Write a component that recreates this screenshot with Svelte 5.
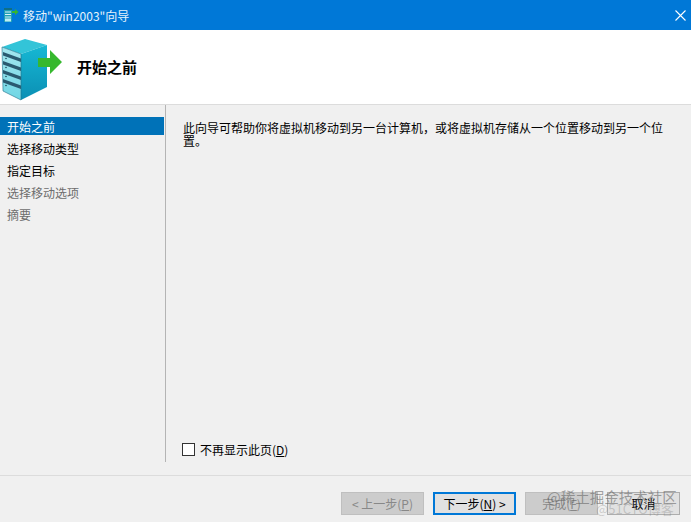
<script>
	const steps = [
		{ label: '开始之前', active: true },
		{ label: '选择移动类型' },
		{ label: '指定目标' },
		{ label: '选择移动选项', muted: true },
		{ label: '摘要', muted: true }
	];
	const slats = [0, 1, 2, 3];
</script>

<div class="wizard">
	<header class="titlebar">
		<svg class="app-icon" viewBox="0 0 18 16" width="18" height="16">
			<rect x="1" y="1" width="8" height="14" fill="#1f9fb5" />
			<rect x="1" y="1" width="8" height="2" fill="#0f6f86" />
			<path d="M2 5h6M2 7.500h6M2 10h6" stroke="#d8f4f8" stroke-width="1.1" />
			<rect x="2" y="11.500" width="6" height="3" fill="#bdeef4" />
			<path d="M9 4h3V2l3.500 3-3.500 3V6H9z" fill="#35b52f" />
		</svg>
		<span class="title">移动"win2003"向导</span>
		<svg class="close" viewBox="0 0 11 11" width="11" height="11">
			<path d="M.5.500l10 10M10.500.500l-10 10" stroke="#fff" stroke-width="1.100" fill="none" />
		</svg>
	</header>

	<section class="banner">
		<svg class="banner-icon" viewBox="0 32 64 70" width="64" height="70">
			<defs>
				<linearGradient id="front" x1="0" y1="0" x2="0" y2="1">
					<stop offset="0" stop-color="#a5e6ef" />
					<stop offset="1" stop-color="#6fd6e4" />
				</linearGradient>
				<linearGradient id="side" x1="0" y1="0" x2="0" y2="1">
					<stop offset="0" stop-color="#16b8d4" />
					<stop offset="1" stop-color="#0b8fb4" />
				</linearGradient>
			</defs>
			<path d="M2 47l23-8 22 6-26 9z" fill="#33c4d8" />
			<path d="M21 54l26-9v42l-26 13z" fill="url(#side)" />
			<path d="M2 47l19 7v46L3 91z" fill="url(#front)" />
			{#each slats as i}
				<path d={`M3 ${52 + i * 9}l18 6.500v3.500L3 ${55.500 + i * 9}z`} fill="#2a5a70" />
				<circle cx="6" cy={58.500 + i * 9} r="0.800" fill="#1c4a5c" />
			{/each}
			<path d="M2 47l19 7v46L3 91z" fill="none" stroke="#1f6f88" stroke-width="0.600" />
			<path d="M38 58h12v-8l12 12-12 12v-7H38z" fill="#36b82e" />
		</svg>
		<h1>开始之前</h1>
	</section>

	<div class="body">
		<nav class="steps">
			{#each steps as step}
				<div class="step" class:active={step.active} class:muted={step.muted}>{step.label}</div>
			{/each}
		</nav>
		<main class="content">
			<p>此向导可帮助你将虚拟机移动到另一台计算机，或将虚拟机存储从一个位置移动到另一个位置。</p>
			<label class="skip">
				<span class="box"></span>
				<span>不再显示此页(<u>D</u>)</span>
			</label>
		</main>
	</div>

	<footer class="actions">
		<button class="btn" disabled>&lt; 上一步(<u>P</u>)</button>
		<button class="btn primary">下一步(<u>N</u>) &gt;</button>
		<button class="btn finish" disabled>完成(<u>F</u>)</button>
		<button class="btn cancel">取消</button>
		<div class="watermark">@稀土掘金技术社区</div>
		<div class="watermark second">@51CTO博客</div>
	</footer>
</div>

<style>
	:global(body) {
		margin: 0;
	}

	.wizard {
		display: flex;
		flex-direction: column;
		width: 691px;
		height: 522px;
		overflow: hidden;
		background: #f0f0f0;
		color: #000;
		font-family: 'Noto Sans CJK SC', 'Liberation Sans', sans-serif;
		font-size: 12px;
	}

	.titlebar {
		display: flex;
		flex: none;
		align-items: center;
		height: 30px;
		padding: 0 5px 0 3px;
		background: #0078d7;
		color: #fff;
	}

	.app-icon {
		flex: none;
	}

	.title {
		margin-left: 2px;
		font-size: 12px;
		color: #e6f2fb;
	}

	.close {
		margin-left: auto;
	}

	.banner {
		display: flex;
		flex: none;
		align-items: center;
		height: 74px;
		border-bottom: 1px solid #dcdcdc;
		background: #fff;
	}

	.banner-icon {
		flex: none;
	}

	h1 {
		margin: 0 0 2px 13px;
		font-size: 15px;
		font-weight: 700;
		line-height: 1;
	}

	.body {
		display: flex;
		flex: none;
		height: 357px;
	}

	.steps {
		flex: none;
		width: 165px;
		margin-right: 1px;
		padding-top: 12px;
		box-shadow: 1px 0 0 #b4b4b4;
		box-sizing: border-box;
	}

	.step {
		height: 22px;
		padding-left: 7px;
		line-height: 19px;
		white-space: nowrap;
	}

	.step.active {
		height: 18px;
		margin-right: 1px;
		margin-bottom: 4px;
		background: #0072b8;
		color: #fff;
		line-height: 19px;
	}

	.step.muted {
		color: #6d6d6d;
	}

	.content {
		display: flex;
		flex: 1;
		flex-direction: column;
		padding: 16px 16px 4px 16px;
	}

	p {
		margin: 0 0 0 1px;
		font-size: 12px;
		line-height: 13px;
	}

	.skip {
		display: flex;
		align-items: center;
		gap: 5px;
		margin-top: auto;
	}

	.box {
		width: 11px;
		height: 11px;
		border: 1px solid #333;
		background: #fff;
	}

	.actions {
		position: relative;
		display: flex;
		flex: 1;
		align-items: flex-end;
		gap: 9px;
		margin-top: 13px;
		padding: 0 9px 7px 341px;
		border-top: 1px solid #dcdcdc;
	}

	.btn {
		flex: none;
		width: 83px;
		height: 23px;
		padding: 0;
		border: 1px solid #adadad;
		background: #e1e1e1;
		color: #000;
		font: inherit;
	}

	.btn:disabled {
		border-color: #bfbfbf;
		background: #ccc;
		color: #888;
	}

	.primary {
		border: 2px solid #0078d7;
	}

	.finish,
	.cancel {
		width: 73px;
	}

	.watermark {
		position: absolute;
		left: 547px;
		bottom: 15px;
		color: rgba(90, 90, 90, 0.55);
		font-size: 14.500px;
		line-height: 20px;
		white-space: nowrap;
		pointer-events: none;
	}

	.second {
		left: 596px;
		bottom: 3px;
		color: rgba(120, 120, 120, 0.32);
		font-size: 13px;
	}
</style>
